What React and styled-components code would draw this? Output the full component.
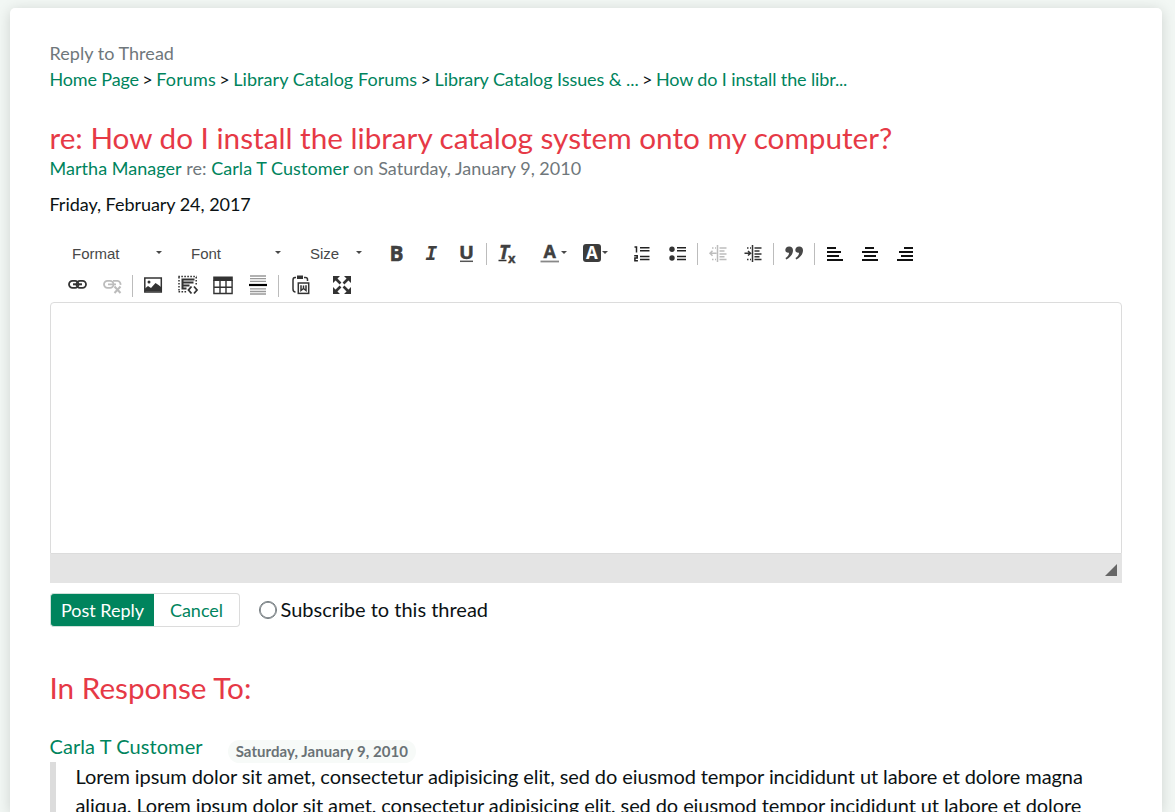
import React from "react";
import styled, { createGlobalStyle } from "styled-components";

const GlobalStyle = createGlobalStyle`
  *, *::before, *::after { box-sizing: border-box; }
  html, body { height: 100%; margin: 0; overflow: hidden; }
  body { background: #f2f7f4; color: #0b1214; font-family: Lato, sans-serif; }
`;

const Card = styled.main`
  width: 1152px;
  height: 804px;
  overflow: hidden;
  margin: 8px 0 0 10px;
  padding: 32px 40px 0;
  border-radius: 5px 5px 0 0;
  background: #fff;
  box-shadow: 0 2px 14px rgba(0, 0, 0, 0.15);
`;
const Line = styled.div`
  font-size: 18px;
  line-height: 26px;
  white-space: nowrap;
  letter-spacing: ${(p) => p.$track || 0}px;
  color: ${(p) => (p.$muted ? "#6f777b" : "#0b1214")};
  margin: ${(p) => p.$top || 0}px 0 0 -0.5px;
`;
const Crumbs = styled.nav`
  display: flex;
  margin-left: -0.5px;
  font-size: 18px;
  line-height: 26px;
  white-space: nowrap;
`;
const CrumbMark = styled.span`
  width: 17.3px;
  text-align: center;
`;
const Link = styled.a`
  color: #00845d;
  text-decoration: none;
  letter-spacing: ${(p) => (p.$track ? `${p.$track}px` : "inherit")};
`;
const Title = styled.h1`
  margin: ${(p) => p.$top}px 0 0 -0.5px;
  font-size: 29.7px;
  font-weight: 400;
  line-height: 38px;
  color: #e63946;
  white-space: nowrap;
`;
const Toolbar = styled.div`
  margin-top: 20px;
  height: 65px;
`;
const ToolRow = styled.div`
  display: flex;
  align-items: center;
  height: ${(p) => p.$h}px;
  padding-left: ${(p) => p.$left}px;
`;
const Combo = styled.div`
  display: flex;
  align-items: center;
  justify-content: space-between;
  width: ${(p) => p.$w}px;
  margin-right: ${(p) => 119 - p.$w}px;
  color: #484848;
  font: 15px "Liberation Sans", sans-serif;
`;
const Caret = styled.span`
  width: 0;
  height: 0;
  margin: -2px 0 0 ${(p) => p.$gap || 0}px;
  border: 3px solid transparent;
  border-top-color: #484848;
  border-bottom: 0;
`;
const Tool = styled.span`
  display: flex;
  align-items: center;
  justify-content: center;
  width: ${(p) => p.$w || 35}px;
  height: 22px;
  margin-left: ${(p) => p.$gap || 0}px;
  opacity: ${(p) => (p.$off ? 0.32 : 1)};
`;
const Separator = styled.span`
  width: 1px;
  height: 22px;
  margin: 2px ${(p) => p.$after || 2}px 0 ${(p) => p.$before || 2}px;
  background: #bcbcbc;
`;
const Drawing = styled.svg`
  display: block;
  flex: none;
  width: 20px;
  height: 20px;
  overflow: visible;
  fill: none;
  stroke: #333;
  stroke-width: 1.5;
  text {
    fill: #404040;
    stroke: none;
    font-family: "Open Sans", sans-serif;
    font-weight: 700;
  }
`;
const Icon = ({ children }) => <Drawing viewBox="0 0 20 20">{children}</Drawing>;

const Editor = styled.div`
  height: 252px;
  border: 1px solid #dcdcdc;
  border-radius: 4px 4px 0 0;
`;
const EditorFooter = styled.div`
  display: flex;
  justify-content: flex-end;
  align-items: flex-end;
  height: 29px;
  padding: 0 5px 7px 0;
  background: #e4e4e4;
`;
const Grip = styled.span`
  border-left: 12px solid transparent;
  border-bottom: 12px solid #666;
`;
const Actions = styled.div`
  display: flex;
  align-items: center;
  height: 34px;
  margin-top: 10px;
`;
const Button = styled.button`
  height: 34px;
  width: ${(p) => p.$w}px;
  padding: 0;
  font: 18px/30px Lato, sans-serif;
  border: 1px solid ${(p) => (p.$primary ? "#cfe0da" : "#dcdcdc")};
  border-left-width: ${(p) => (p.$primary ? 1 : 0)}px;
  border-right-width: ${(p) => (p.$primary ? 0 : 1)}px;
  border-radius: ${(p) => (p.$primary ? "4px 0 0 4px" : "0 4px 4px 0")};
  background: ${(p) => (p.$primary ? "#00845d" : "#fff")};
  color: ${(p) => (p.$primary ? "#fff" : "#00845d")};
`;
const Subscribe = styled.label`
  display: flex;
  align-items: center;
  gap: 4.5px;
  margin: -2px 0 0 19px;
  font-size: 20px;
  line-height: 32px;
`;
const Radio = styled.span`
  width: 18px;
  height: 18px;
  margin: 1px -0.5px 0;
  border: 1px solid #70787c;
  border-radius: 50%;
  box-shadow: inset 0 0 0 0.7px #70787c;
`;
const Author = styled.div`
  display: flex;
  align-items: center;
  height: 30px;
  margin: 24px 0 0 -0.5px;
  font-size: 20px;
  letter-spacing: 0.08px;
`;
const Badge = styled.span`
  height: 23px;
  margin: 11px 0 0 25px;
  padding: 0 8px;
  border-radius: 12px;
  background: #f7faf8;
  color: #6a7276;
  font-size: 15px;
  font-weight: 700;
  line-height: 23px;
  letter-spacing: 0.06px;
  white-space: nowrap;
`;
const Quote = styled.blockquote`
  height: 100px;
  margin: 1px 0 0;
  padding-left: 19.5px;
  border-left: 6px solid #dcdcdc;
  font-size: 20px;
  line-height: 28.5px;
  letter-spacing: -0.087px;
`;
const QuoteLine = styled.div`
  white-space: nowrap;
`;

export default function App() {
  return (
    <>
      <GlobalStyle />
      <Card>
        <Line $muted $track={0.04}>Reply to Thread</Line>
        <Crumbs>
          <Link $track={-0.15}>Home Page</Link>
          <CrumbMark>&gt;</CrumbMark>
          <Link $track={0.15}>Forums</Link>
          <CrumbMark>&gt;</CrumbMark>
          <Link $track={0.07}>Library Catalog Forums</Link>
          <CrumbMark>&gt;</CrumbMark>
          <Link $track={-0.07}>Library Catalog Issues &amp; ...</Link>
          <CrumbMark>&gt;</CrumbMark>
          <Link $track={-0.13}>How do I install the libr...</Link>
        </Crumbs>
        <Title $top={27}>re: How do I install the library catalog system onto my computer?</Title>
        <Line $muted $top={-2}>
          <Link $track={0.04}>Martha Manager</Link> re: <Link $track={0.06}>Carla T Customer</Link> on Saturday, January 9, 2010
        </Line>
        <Line $top={10} $track={-0.04}>Friday, February 24, 2017</Line>

        <Toolbar>
          <ToolRow $h={32} $left={22}>
            <Combo $w={90}>Format<Caret /></Combo>
            <Combo $w={90}>Font<Caret /></Combo>
            <Combo $w={52}>Size<Caret /></Combo>
            <Tool $gap={-50}><Icon><text x="2.500" y="17.500" fontSize="21" textLength="14" lengthAdjust="spacingAndGlyphs" style={{ stroke: "#404040", strokeWidth: 0.5 }}>B</text></Icon></Tool>
            <Tool><Icon><text x="3.500" y="17.300" fontSize="19.500" style={{ fontFamily: "DejaVu Sans Mono", fontStyle: "italic" }}>I</text></Icon></Tool>
            <Tool><Icon><text x="2" y="15.500" fontSize="18.500" textLength="15" lengthAdjust="spacingAndGlyphs" style={{ stroke: "#404040", strokeWidth: 0.4 }}>U</text><path d="M3 18.300h13" stroke="#555" /></Icon></Tool>
            <Separator />
            <Tool>
              <Icon>
                <text x="2" y="15.500" fontSize="19" fontStyle="italic" style={{ stroke: "#404040", strokeWidth: 0.4 }}>T</text>
                <text x="11" y="19.500" fontSize="13" style={{ stroke: "#404040", strokeWidth: 0.3 }}>x</text>
                <path d="M1.500 17.500h8" />
              </Icon>
            </Tool>
            <Tool $gap={12}><Icon><text x="2.500" y="14.500" fontSize="18" style={{ stroke: "#404040", strokeWidth: 0.4 }}>A</text><path d="M-.5 18.500h18.500" stroke="#888" strokeWidth="1.800" /></Icon><Caret /></Tool>
            <Tool $gap={6.5}>
              <Icon>
                <rect x="1" y="1" width="18" height="18" rx="3" fill="#3c3c3c" stroke="none" />
                <text x="4" y="16" fontSize="17" style={{ fill: "#fff" }}>A</text>
              </Icon>
              <Caret />
            </Tool>
            <Tool $gap={12.5}>
              <Icon>
                <path d="M7 4.800h9.500M7 7.800h9.500M7 13.500h9.500M7 16.500h9.500" stroke="#222" />
                <path d="M1.500 4h2v5.500M1.200 12.700h3v2.300H1.900v2.800h3" stroke="#222" />
              </Icon>
            </Tool>
            <Tool>
              <Icon>
                <path d="M9 4.800h9M9 7.800h9M9 13.500h9M9 16.500h9" stroke="#222" />
                <circle cx="4" cy="6.300" r="2.700" fill="#333" stroke="none" />
                <circle cx="4" cy="15" r="2.700" fill="#333" stroke="none" />
              </Icon>
            </Tool>
            <Separator $after={3} />
            <Tool $off>
              <Icon>
                <path d="M8.500 2v17M10.500 5h7M10.500 8h5M10.500 11h7M10.500 13.700h5M10.500 16.500h7M.5 10.200h7M3.500 7.700L1 10.200L3.500 12.700" />
                <path d="M3 5h4M3 16.500h4" strokeDasharray="1.500 1.500" />
              </Icon>
            </Tool>
            <Tool>
              <Icon>
                <path d="M8.500 2v17M10.500 5h7M10.500 8h5M10.500 11h7M10.500 13.700h5M10.500 16.500h7M.5 10.200h6M4 8L6.500 10.200L4 12.500" />
                <path d="M3 5h4M3 16.500h4" strokeDasharray="1.500 1.500" />
              </Icon>
            </Tool>
            <Separator />
            <Tool>
              <Icon>
                <g fill="#484848" stroke="none">
                  <path d="M5.200 3.500C2.800 3.500 1.300 5.100 1.300 7C1.300 8.900 2.900 10 5.100 9.700C5 12 3.500 13.700 1.500 15.100L2.200 16.500C6.500 14.500 9 11 9 7.300C9 5 7.600 3.500 5.200 3.500Z" />
                  <path d="M15.200 3.500C12.800 3.500 11.300 5.100 11.300 7C11.300 8.900 12.900 10 15.100 9.700C15 12 13.500 13.700 11.500 15.100L12.200 16.500C16.500 14.500 19 11 19 7.300C19 5 17.600 3.500 15.200 3.500Z" />
                </g>
              </Icon>
            </Tool>
            <Separator $before={3} />
            <Tool><Icon><path d="M2 5h9M2 9h14M2 13h12M2 17h16" stroke="#111" strokeWidth="2" /></Icon></Tool>
            <Tool><Icon><path d="M5 5h9M2 9h16M4 13h12M2 17h16" stroke="#111" strokeWidth="2" /></Icon></Tool>
            <Tool><Icon><path d="M9 5h9M4 9h14M6 13h12M2 17h16" stroke="#111" strokeWidth="2" /></Icon></Tool>
          </ToolRow>

          <ToolRow $h={32} $left={10}>
            <Tool>
              <Icon>
                <rect x="1" y="5.800" width="9.500" height="7" rx="3.500" strokeWidth="1.800" />
                <rect x="8.500" y="5.800" width="9.500" height="7" rx="3.500" strokeWidth="1.800" />
                <path d="M5 9.300h9" strokeWidth="2" />
              </Icon>
            </Tool>
            <Tool $off>
              <Icon>
                <rect x="1" y="5.800" width="9.500" height="7" rx="3.500" strokeWidth="1.800" />
                <path d="M5 9.300h8M10 5.800h4.500a3.500 3.500 0 0 1 3 4" strokeWidth="1.800" />
                <path d="M11.500 11.500l6 6.500M17.500 11.500l-6 6.500" strokeWidth="2" />
              </Icon>
            </Tool>
            <Separator />
            <Tool>
              <Icon>
                <rect x="1.800" y="3" width="16.500" height="14" />
                <circle cx="6" cy="7" r="1.500" fill="#333" stroke="none" />
                <path d="M2 16.500v-3l3-2.500l3 2l4.500-5l3 2l2.500 2v4.500Z" fill="#333" stroke="none" />
              </Icon>
            </Tool>
            <Tool>
              <Icon>
                <path d="M.3 1.500h18.500M1 2v14.500M18.200 2v9M.5 16.800h9" strokeDasharray="1.600 1.400" />
                <path d="M3.500 4.500h13M3.500 7.500h12M3.500 10.500h8M3.500 13.500h5M4.500 4v10" strokeWidth="2" />
                <path d="M13.500 11.500l-3 3.500l3 3.500M16 11.500l3 3.500l-3 3.500" strokeWidth="1.800" />
              </Icon>
            </Tool>
            <Tool>
              <Icon>
                <rect x="0.200" y="1.500" width="19.600" height="4.500" fill="#333" stroke="none" />
                <path d="M.9 5v13.500h18.200V5M1 12.200h18M7 6v12M13 6v12" strokeWidth="1.400" />
              </Icon>
            </Tool>
            <Tool>
              <Icon>
                <path d="M2 1h16M2 3.700h16M2 6.400h16M2 13.800h16M2 16.500h16M2 19h16" stroke="#999" strokeWidth="1.300" />
                <path d="M1 10h18" stroke="#000" strokeWidth="2.200" />
              </Icon>
            </Tool>
            <Separator $before={3} $after={4} />
            <Tool $gap={0.5}>
              <Icon>
                <path d="M5 2.500H4Q2 2.500 2 5V14Q2 17 4.500 17M13 2.500h1.500q2 0 2 2V6" />
                <path d="M6 .5h6v3.500H6z" fill="#333" stroke="none" />
                <rect x="7.300" y="8" width="10.400" height="10.400" />
                <path d="M10 10.300v5.200l2.500-2l2.500 2v-5.200M12.500 10.500v3" />
              </Icon>
            </Tool>
            <Tool $gap={6}>
              <Icon>
                <path d="M1 8V1h7ZM12 1H19v7ZM1 12V19h7ZM12 19H19v-7Z" fill="#333" stroke="none" />
                <path d="M3.500 3.500l5 5M16.500 3.500l-5 5M3.500 16.500l5-5M16.500 16.500l-5-5" strokeWidth="2.600" />
              </Icon>
            </Tool>
          </ToolRow>
        </Toolbar>
        <Editor />
        <EditorFooter><Grip /></EditorFooter>

        <Actions>
          <Button $primary $w={104}>Post Reply</Button>
          <Button $w={86}>Cancel</Button>
          <Subscribe><Radio />Subscribe to this thread</Subscribe>
        </Actions>

        <Title as="h2" $top={42}>In Response To:</Title>
        <Author>
          <Link>Carla T Customer</Link>
          <Badge>Saturday, January 9, 2010</Badge>
        </Author>
        <Quote>
          <QuoteLine>Lorem ipsum dolor sit amet, consectetur adipisicing elit, sed do eiusmod tempor incididunt ut labore et dolore magna</QuoteLine>
          <QuoteLine>aliqua. Lorem ipsum dolor sit amet, consectetur adipisicing elit, sed do eiusmod tempor incididunt ut labore et dolore</QuoteLine>
        </Quote>
      </Card>
    </>
  );
}
